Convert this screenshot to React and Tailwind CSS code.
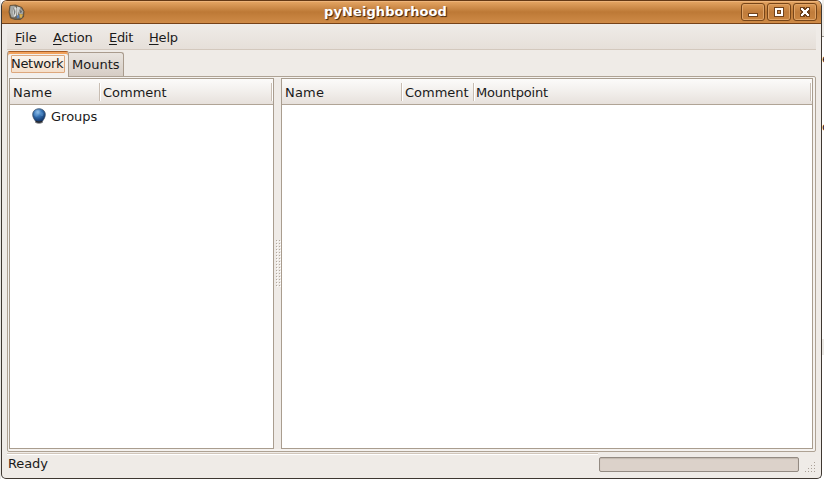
import React from "react";

function MenuItem({ label, className }) {
  return (
    <span className={`whitespace-nowrap ${className}`}>
      <span className="underline decoration-1 underline-offset-2">{label[0]}</span>
      {label.slice(1)}
    </span>
  );
}

function TitleButton({ children }) {
  return (
    <button className="h-[18px] w-6 rounded-[3px] border border-[#774518] bg-gradient-to-b from-[#dd9a55] via-[#c07c3b] to-[#c9843f] shadow-[inset_0_0_0_1px_#e0a467]">
      <svg width="22" height="16" viewBox="0 0 22 16" shapeRendering="crispEdges" className="block">
        {children}
      </svg>
    </button>
  );
}

function AppIcon() {
  return (
    <svg width="17" height="17" viewBox="0 0 17 17" className="block">
      <path d="M2 1.500 7.500 1 10 2 14 3.500 16 7.500 15.500 13 12.500 15.500 7 15.500 2.500 14 1 8Z" fill="#6d6557" stroke="#5b4a35" strokeWidth="0.8" />
      <path d="M2.500 2 6.500 1.800 4.800 7 6.500 13.500 3.500 13 1.800 8Z" fill="#a5a8a6" />
      <path d="M6.800 2 8.500 4.500 8.300 11.500 6.300 13.300 4.800 8Z" fill="#dfe1e0" />
      <path d="M6.800 4 7.500 8 6.500 11.500 5.700 8Z" fill="#7b7d7c" />
      <path d="M9 2.500 12.500 3.500 10.500 8.500 9.500 13.500 8.600 8Z" fill="#c9cccb" />
      <path d="M12.700 3.700 15.200 7.500 14.800 10 11 10 11 7.500Z" fill="#a2a6a6" />
      <path d="M12.500 5.500 14 8 12 9Z" fill="#5c5e5f" />
      <path d="M11.500 10 15 10.500 13.500 14 11.500 13.500Z" fill="#d9ad4b" />
      <path d="M8.500 12 11 10.500 11.500 13.500 9 14.500Z" fill="#5a7fb2" />
    </svg>
  );
}

function Globe() {
  return (
    <svg width="16" height="17" viewBox="0 0 16 17" className="block">
      <defs>
        <radialGradient id="globe" cx="40%" cy="25%" r="75%">
          <stop offset="0" stopColor="#9cc8ee" />
          <stop offset="0.4" stopColor="#3a78ba" />
          <stop offset="1" stopColor="#0b2c60" />
        </radialGradient>
      </defs>
      <path d="M4.500 12.500h7l.5 2Q8 17 4 14.500Z" fill="#77777a" />
      <path d="M8 .8C11.800 .8 14.300 3.200 14.300 6.500 14.300 9.500 12.500 12 11 13.500Q8 14.800 5 13.500C3.500 12 1.700 9.500 1.700 6.500 1.700 3.200 4.200 .8 8 .8Z" fill="url(#globe)" stroke="#3d4f66" strokeWidth="0.8" />
      <path d="M3.500 5 6 3 8 4 6 6 7 8 5 9 3 7ZM10 4 12.500 5 12 8 10 8 9 6Z" fill="#71a7da" opacity="0.35" />
      <path d="M5 13.200Q8 15 11 13.200" stroke="#26282c" strokeWidth="1.200" fill="none" />
    </svg>
  );
}

function Column({ label, className }) {
  return (
    <div className={`relative flex h-full items-center pt-[3px] whitespace-nowrap ${className}`}>
      <span>{label}</span>
      <span className="absolute top-1 right-0 h-[18px] w-0.5 border-l border-[#c8bdb2] bg-white" />
    </div>
  );
}

function Header({ children }) {
  return (
    <div className="flex h-[26px] border-b border-[#b0a496] bg-gradient-to-b from-[#fcfbfa] via-[#f2efec] to-[#e7e1dc]">
      {children}
    </div>
  );
}

const gripRows = [1, 2, 3, 4];
const handleRows = Array.from({ length: 16 }, (_, i) => i);

export default function App() {
  return (
    <div className="flex h-[479px] w-[824px] overflow-hidden bg-white font-['DejaVu_Sans',sans-serif] text-[13px] leading-4 text-[#1a1a1a]">
      <div className="h-full w-px bg-[#e9e7e4]" />
      <div className="flex h-[479px] w-[821px] shrink-0 flex-col overflow-hidden rounded-t-[6px] rounded-b-[5px] border border-[#3e3731] border-t-[#633815] bg-[#efebe7]">
        <div className="relative flex h-[23px] shrink-0 items-center justify-between border-b border-[#764218] bg-gradient-to-b from-[#e6a765] via-[#bd7936] to-[#cf8b47] pr-1 pl-[6px] shadow-[inset_0_1px_0_#edb47a]">
          <AppIcon />
          <div className="absolute inset-x-0 top-[3px] pr-[52px] text-center font-bold tracking-[0.1px] text-white [text-shadow:1px_1px_1px_#3c210b]">
            pyNeighborhood
          </div>
          <div className="flex gap-0.5">
            <TitleButton>
              <path d="M6 9h10v4H6z" fill="#70421c" />
              <path d="M7 10h8v2H7z" fill="#fff" />
            </TitleButton>
            <TitleButton>
              <path d="M6 3h10v10H6z" fill="#70421c" />
              <path fillRule="evenodd" d="M7 4h8v8H7zM9 6v4h4V6z" fill="#fff" />
              <path d="M9 6h4v4H9z" fill="#70421c" />
              <path d="M10 7h2v2h-2z" fill="#c9843f" />
            </TitleButton>
            <TitleButton>
              <path d="M6 3h4l1 1 1-1h4v4l-1 1 1 1v4h-4l-1-1-1 1H6V9l1-1-1-1z" fill="#70421c" />
              <path d="M7 4h2v1h1v1h2V5h1V4h2v2h-1v1h-1v2h1v1h1v2h-2v-1h-1v-1h-2v1H9v1H7v-2h1V9h1V7H8V6H7z" fill="#fff" />
            </TitleButton>
          </div>
        </div>

        <div className="flex grow flex-col px-[5px]">
          <div className="flex h-[26px] shrink-0 items-center border-b border-[#d3c8bd] bg-gradient-to-b from-[#efece8] to-[#e6dfd9] pt-[2px] pl-2">
            <MenuItem label="File" className="w-[38px]" />
            <MenuItem label="Action" className="w-14 tracking-[-0.2px]" />
            <MenuItem label="Edit" className="w-10 tracking-[-0.3px]" />
            <MenuItem label="Help" className="tracking-[-0.2px]" />
          </div>

          <div className="flex h-[26px] shrink-0 items-end">
            <div className="relative z-10 -mb-px h-[26px] w-[62px] rounded-t-[3px] border border-b-0 border-[#a99b8d] border-t-[#a75c24] bg-[#f3f0ed] px-[3px] pt-[3px] shadow-[inset_0_2px_0_#f2a25c]">
              <div className="h-[18px] rounded-[1px] border border-[#dda77c] bg-gradient-to-b from-[#faf4ed] to-[#f5dfca] tracking-[-0.3px] whitespace-nowrap">
                <span className="-ml-px">Network</span>
              </div>
            </div>
            <div className="flex h-[24px] w-[55px] items-center rounded-tr-[3px] border border-b-0 border-l-0 border-[#a99b8d] bg-gradient-to-b from-[#e9e4df] to-[#d6cdc5] pl-[3px]">
              Mounts
            </div>
          </div>

          <div className="flex h-[376px] w-[809px] shrink-0 rounded-b-[2px] rounded-tr-[2px] border border-[#aea294] bg-[#f5f2ef] pt-px pr-0.5 pb-0.5 pl-px">
            <section className="w-[265px] border border-[#a99d8f] bg-white">
              <Header>
                <Column label="Name" className="w-[91px] pl-[3px] tracking-[0.2px]" />
                <Column label="Comment" className="w-[172px] pl-[2px]" />
              </Header>
              <div className="flex h-[23px] items-center gap-[4px] pl-[21px]">
                <Globe />
                <span>Groups</span>
              </div>
            </section>
            <div className="flex w-[7px] justify-center bg-[#efebe7] pt-[162px] pl-0.5">
              <svg width="5" height="48" viewBox="0 0 5 48" shapeRendering="crispEdges">
                {handleRows.map((i) => (
                  <path key={i} d={`M0 ${i * 3}h1v1h-1zM3 ${i * 3}h1v1h-1z`} fill="#b3a99e" />
                ))}
                {handleRows.map((i) => (
                  <path key={i} d={`M1 ${i * 3 + 1}h1v1h-1zM4 ${i * 3 + 1}h1v1h-1z`} fill="#fff" />
                ))}
              </svg>
            </div>
            <section className="grow border border-[#a99d8f] bg-white">
              <Header>
                <Column label="Name" className="w-[121px] pl-[3px] tracking-[0.2px]" />
                <Column label="Comment" className="w-[72px] pl-[2px]" />
                <Column label="Mountpoint" className="grow pl-px tracking-[-0.2px]" />
              </Header>
            </section>
          </div>

          <footer className="flex grow justify-between">
            <div className="mt-px w-[591px] border-t border-[#d1c6bb] pt-[2px] pl-px tracking-[-0.1px] shadow-[inset_0_1px_0_#fff]">
              Ready
            </div>
            <div className="flex gap-1.5">
              <div className="mt-[5px] h-[15px] w-[200px] rounded-[2px] border border-[#938a82] bg-[#dcd2ca] shadow-[inset_0_1px_1px_#c3b8af]" />
              <svg width="11" height="12" viewBox="0 0 11 12" shapeRendering="crispEdges" className="mt-[9px]">
                {gripRows.map((row) =>
                  Array.from({ length: row }, (_, n) => (
                    <path key={`${row}-${n}`} d={`M${9 - n * 3} ${row * 3 - 2}h1v1h-1z`} fill="#aaa097" />
                  ))
                )}
              </svg>
            </div>
          </footer>
        </div>
      </div>
      <div className="flex w-0.5 shrink-0 flex-col overflow-hidden bg-white">
        <div className="h-[37px] shrink-0 border-b border-[#9a9690] bg-[#efede9]" />
        <div className="mt-[14px] h-4 shrink-0 text-[#222]">e</div>
        <div className="mt-[52px] h-4 shrink-0 text-[#222]">o</div>
        <div className="mt-[204px] h-[16px] shrink-0 bg-[#ebe9e5]" />
      </div>
    </div>
  );
}
